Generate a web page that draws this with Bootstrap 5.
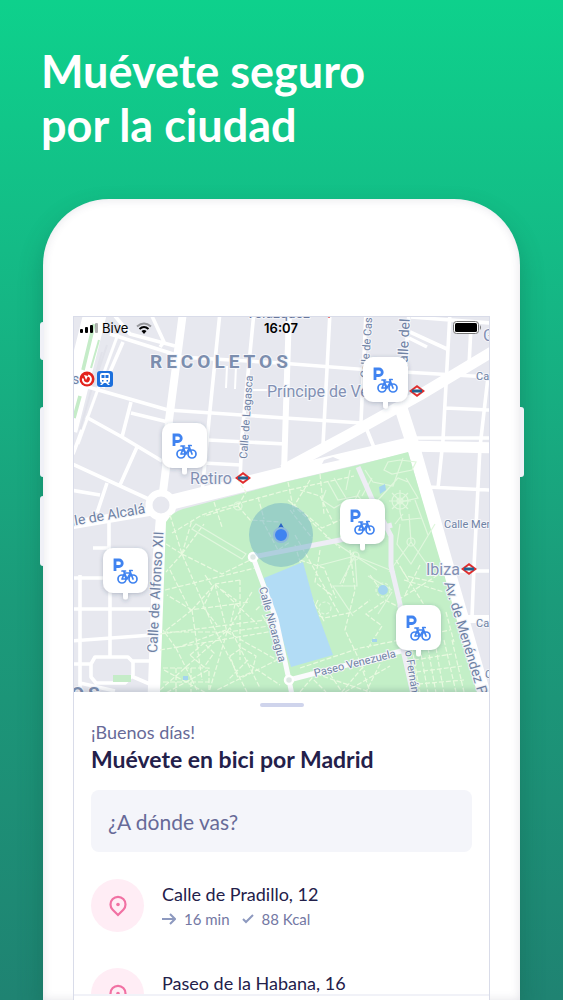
<!DOCTYPE html>
<html lang="es">
<head>
<meta charset="utf-8">
<meta name="viewport" content="width=device-width, initial-scale=1">
<title>Bive</title>
<link href="https://cdn.jsdelivr.net/npm/bootstrap@5.3.0/dist/css/bootstrap.min.css" rel="stylesheet">
<style>
  body { font-family: Lato, "Open Sans", sans-serif; background: linear-gradient(#0ed18c 0%, #14bb86 25%, #1b9b7a 60%, #1f8372 100%); color: #23204a; }
  .promo { padding: 44px 41px 0; height: 199px; font-size: 45px; line-height: 54px; font-weight: 700; }
  .phone { margin: 0 43px; padding: 117px 30px 0; background: #fff; border-radius: 66px 66px 0 0; min-height: 0;
    box-shadow: 0 12px 24px rgba(10,80,60,.3), inset 0 0 10px rgba(60,60,90,.14); }
  .side-key { position: absolute; width: 4px; height: 70px; background: #f0f1f7; border-radius: 3px 0 0 3px; left: -3px; }
  .key-mute { top: 123px; height: 38px; }
  .key-up { top: 208px; }
  .key-down { top: 297px; }
  .key-power { top: 208px; left: auto; right: -4px; border-radius: 0 3px 3px 0; }
  .screen { border: 1px solid #d9dce9; border-bottom: 0; min-height: 0; }
  .map { height: 375px; background: #e7e8ef; }
  .map svg.city { width: 100%; height: 100%; display: block; }
  .status { top: 0; left: 0; right: 0; height: 22px; padding: 0 7px 0 6px; font: 13px/22px Inter, sans-serif; color: #000; }
  .status > * { flex: 1 1 0; }
  .sheet { padding: 11px 17px 0; background: #fff; min-height: 0; box-shadow: 0 -2px 6px rgba(40,60,90,.2); }
  .grip { width: 44px; height: 4px; background: #cfd4ec; }
  .hello { margin-top: 13px; font-size: 18px; line-height: 24px; color: #676a98; }
  .sheet-title { font-size: 23px; line-height: 30px; font-weight: 700; margin: 0; }
  .search { margin-top: 16px; height: 62px; padding: 0 17px; border: 0; border-radius: 8px; background: #f4f5fa; font-size: 21px; color: #676a98; }
  .search::placeholder { color: #676a98; opacity: 1; }
  .places { margin-top: 27px; gap: 36px; }
  .place { height: 53px; gap: 18px; color: #23204a; }
  .place-dot { width: 53px; height: 53px; background: #ffedf5; }
  .place-text { padding-top: 2px; }
  .place-name { font-size: 18px; line-height: 26px; }
  .place-meta { font-size: 15px; line-height: 24px; color: #7378a3; }
  .tabs-edge { height: 6px; border-top: 2px solid #f1f2f8; background: #fff; }
  .roads { fill: none; stroke: #fff; stroke-width: 3.600; stroke-linejoin: round; }
  .wide { stroke-width: 13; }
  .walk { fill: none; stroke: #e9fae0; stroke-width: 1.2; stroke-dasharray: 5 2; }
  .trail { fill: none; stroke: #e0f7dd; stroke-width: 1.2; }
  .lane { fill: none; stroke: #eeedf5; stroke-width: 5; stroke-linejoin: round; }
  .labels { font-family: Roboto, sans-serif; fill: #6f82a4; stroke: #f5f6fa; stroke-width: 2; paint-order: stroke; font-size: 14px; }
  .labels .tiny { font-size: 11px; }
  .labels .big { font-size: 16px; fill: #8290b3; }
  .labels .zone { font-size: 19px; font-weight: 700; letter-spacing: 4px; fill: #7c8eae; }
</style>
</head>
<body class="vh-100 overflow-hidden d-flex flex-column">
<h1 class="promo text-white mb-0 flex-shrink-0">Muévete seguro<br>por la ciudad</h1>

<main class="phone position-relative flex-fill d-flex flex-column">
  <span class="side-key key-mute"></span><span class="side-key key-up"></span>
  <span class="side-key key-down"></span><span class="side-key key-power"></span>

  <div class="screen flex-fill d-flex flex-column overflow-hidden">
    <section class="map position-relative flex-shrink-0" aria-label="Mapa de Madrid">
      <svg class="city" viewBox="74 317 415 375" preserveAspectRatio="xMidYMid slice">
        <defs>
          <g id="pin">
            <path d="M20 43h5v6a2.500 2.500 0 0 1-5 0z" fill="#fff"/>
            <rect width="45" height="45" rx="10" fill="#fff"/>
            <path d="M12 23V12h4a3.100 3.100 0 0 1 0 6.500h-4" fill="none" stroke="#3f83f0" stroke-width="2.800"/>
            <g fill="none" stroke="#3f83f0" stroke-width="1.700" stroke-linecap="round" stroke-linejoin="round">
              <circle cx="19" cy="31" r="4"/><circle cx="30" cy="31" r="4"/>
              <path d="M19 31l2.500-6h6L24 31h-5M21 24l3 7M30 31l-3.300-8.500h2.500M19 23h3.500"/>
            </g>
          </g>
          <g id="metro">
            <path d="M0-6L8 0 0 6-8 0z" fill="#e02d2d"/><path d="M0-3.500L5 0 0 3.500-5 0z" fill="#fff"/><path d="M-5-1.500H5v3H-5z" fill="#23618e"/>
          </g>
          <filter id="lift" x="-30%" y="-30%" width="160%" height="160%"><feDropShadow dx="0" dy="1" stdDeviation="2" flood-color="#30405f" flood-opacity=".3"/></filter>
        </defs>

        <!-- streets around the park -->
        <g class="roads">
          <path stroke-width="3" d="M118 334L78 444"/>
          <path style="stroke-width:23px" d="M96 310L66 430"/>
          <path style="stroke:#c5ecc8" d="M94 324L83 370M80 396l-6 22"/>
          <path style="stroke:#c5ecc8;stroke-width:2px" d="M99 340l-8 28"/>
          <path style="stroke:#e1e2ea;stroke-width:2px" d="M102 352L80 430M107 345L92 390"/>
          <path d="M123 342L103 388M110 334l57 18 12 4M115 316l15 18 45 12M152 316l12 26-4 5"/>
          <path style="stroke-width:8px" d="M183 312L169 420 166 468 162 500"/>
          <path d="M220 312L209 420 202 493M254 312L242 435 240 480M180 357L280 363 370 370 490 377M88 387L168 410 285 418 362 423"/>
          <path d="M131 402l-9 35M131 413l37 9M86 417l36 20 40 24M70 463l85 39M137 447l-17 38M107 483l-10 30M70 490l30 5M82 430l-9 24M208 440l78 4M203 463l38 2"/>
          <path style="stroke-width:2px" d="M227 366l-1 22M236 366l-1 23M248 390h24"/>
          <path style="stroke-width:6px" d="M289 312L284 472"/>
          <path d="M330 312L323 445M366 312L361 422M409 312l-5 68M450 312L443 440 438 488M471 326l-2 40M488 377l-8 70-6 120-2 50M411 317l79 6M410 332l37 17M409 338l18 9M445 408l45 2M365 425l10 25M413 438h77M428 487l62 3"/>
          <path style="stroke-width:11px" d="M283 470L350 434 420 395 495 350M405 446l90 2"/>
          <path style="stroke-width:15px" d="M172 502L285 474 408 445"/>
          <path class="wide" d="M399 402L413 445 447 565 486 700"/>
          <path style="stroke-width:13px" d="M163 510L159 560 154 700"/>
          <path style="stroke-width:9px" d="M70 525L152 511M165 500l9 5"/>
          <circle cx="161" cy="505" r="12" fill="#e7e8ef" style="stroke-width:7px"/>
          <path d="M70 578h36M70 609h80M70 641l82-6M80 575v120M110 590v66M109 522v30M93 548h16M70 664h21l4-7h33l5 5v13l-8 8H96l-5-6v-14M133 661h18M80 683l35 8M131 676l21 9"/>
          <path style="stroke-width:8px" d="M455 619h40"/>
          <path d="M447 571h43M478 673l14 1"/>
        </g>
        <path d="M113 675h18v7h-18z" fill="#c5ecc8"/>
        <path d="M324 460l9-3 7 3-18 4z" fill="#e7e8ef"/>

        <!-- Parque del Retiro -->
        <path d="M166 522Q172 512 183 509L285 482 358 465 408 452 441 563 477 693H160z" fill="#c3efc7"/>
        <g class="walk">
          <path d="M172 533l30-18 20-7 62-17 70-15M182 554l-16 18M170 515l12 39 30 70 35 68M182 554l-16-10M182 554l40 20 30-15M182 554l10-34M182 554l22-30M165 590l90-22M170 570l20 40 60-8M192 610l-25-15M192 610l23-26 42 40M192 610l-28 22M192 610l10 70M215 584l12 48-18 60M160 634l120-16M163 632l65 0 55-8M160 650l120-20M176 648l22 44M176 648l-13-18M176 648l50-18M160 690l70-62 30 60M227 632l25-40M227 632l50 28-60 30M240 580l-25 4M240 580v80M205 575l8 12-10 20 14 18M222 590l14 10-6 26M248 660l-20 20M250 665l30 20"/>
          <path d="M190 655l14-12 10 10-10 14zM230 656l12-8 14 8-4 16-14 6zM256 610l10-10M262 615l14 22"/>
          <path d="M163 668h46v30M163 682h46M176 668v28M191 668v28M164 670l44 24M208 670l-44 24"/>
          <path d="M214 502l8 25M238 506l8-14-8-12M238 506l12 14 30 2M238 506l-34 10M258 497l6 22M288 482l6 30M320 474l4 40M288 500l34 28 18-8M290 510l22 28M295 545l15 50 15 28M300 560l24 8 12 30M262 520l16 30 12-8M310 480l-16 26 46 42M300 490l20 6 14 28"/>
          <path d="M295 535l45 80M320 550l-5 32 18 14M350 550l5 40-10 40 20 42M318 600l-6 12 12 6 30-6 16-12M354 552l-12 34M370 575l10 14M300 668l60-20 90-18M385 600l16 8M368 648l14-22-16-12 20-14M396 560l10 16 28 6M398 600l40-25M402 570l38 60M420 565l-15 30M404 580l40 12"/>
          <path d="M300 692l12-14 14 14M330 674l12 18 20-24 8 24M380 664l-14 28M310 672l60 20M345 692l45-26"/>
          <path d="M412 648l8 45M420 648l8 45M428 648l8 45M436 648l8 45M444 640l12 52M452 640l12 52M414 660l38-6M416 672l46-6M418 684l46-4M446 612l8 30"/>
        </g>
        <g class="trail">
          <path d="M328 482l10 18 20-4 12 14M326 490l-4 10 12 8 14-8M334 478l12 20M350 470l-4 20M360 490l-10 20M365 470l8 12 20 4 10-28M388 462l-4 8 8 4 20-4 4-8-16-2zM378 500l20-22 10 4M372 478l-10 18M406 478l12 20-18 4"/>
          <circle cx="400" cy="501" r="8"/><circle cx="400" cy="501" r="3"/>
          <path d="M400 490v22M389 501h22M392 493l16 16M408 493l-16 16M400 512l2 8 20-2M395 524l8-10M400 524l-3 20 14 20 24-40M411 542l-22 30M411 542l20 28M415 500l13 35M411 542l-2-28M355 556l-30-20M355 556l-38 10M355 556l40 16M355 556l2 30-24 0 20 30M355 556l-15 28M355 556l22 14"/>
          <circle cx="411" cy="542" r="4"/><circle cx="355" cy="556" r="4"/>
          <path d="M196 524l50 30-4 5-50-30zM368 576l24 14M392 592l-14 22"/>
          <circle cx="383" cy="590" r="7" stroke-dasharray="3 2"/><circle cx="325" cy="608" r="6" stroke-dasharray="3 2"/><circle cx="238" cy="506" r="4"/>
        </g>
        <path d="M264 578L303 562 315 606 333 655 291 667 276 617z" fill="#b2dcf5"/>
        <path d="M379 487l6-3 1 6-6 4zM378 590a5 5 0 1 0 10 0 5 5 0 0 0-10 0M183 676h5v4h-5zM372 639h5v3h-5z" fill="#a4d5ee"/>
        <g class="lane">
          <path d="M358 467l14 32 19 37v30l9 38 3 46 10 44M253 557l87-17 52-15"/>
          <path stroke="#fbfbfd" d="M253 557l23 62 13 61 3 15M289 680l112-29"/>
        </g>
        <circle cx="253" cy="557" r="4" fill="#dfe9e5" stroke="#fff" stroke-width="2.500"/>
        <circle cx="289" cy="680" r="4" fill="#dfe9e5" stroke="#fff" stroke-width="2.500"/>

        <g class="labels">
          <text class="zone" x="150" y="368">RECOLETOS</text>
          <text class="zone" x="71" y="700">OS</text>
          <text class="big" x="267" y="397">Príncipe de Ve</text>
          <text class="big" x="190" y="484">Retiro</text>
          <text class="big" x="426" y="575">Ibiza</text>
          <text class="big" x="483" y="341">G</text>
          <text x="246" y="318" fill="#68779c">Velázquez</text>
          <text x="72" y="384">s</text>
          <text class="tiny" x="444" y="528">Calle Men</text>
          <text class="tiny" x="476" y="380">Ca</text>
          <text class="tiny" x="476" y="627">Ca</text>
          <text class="tiny" x="485" y="678">C</text>
          <text class="tiny" transform="translate(247 459)rotate(-86)">Calle de Lagasca</text>
          <text class="tiny" transform="translate(368 378)rotate(-86)">Calle de Cas</text>
          <text transform="translate(407 372)rotate(-87)">Calle del P</text>
          <text transform="translate(72 526)rotate(-10)">lle de Alcalá</text>
          <text transform="translate(157 653)rotate(-87)">Calle de Alfonso XII</text>
          <text class="tiny" transform="translate(259 588)rotate(75)">Calle Nicaragua</text>
          <text class="tiny" transform="translate(315 677)rotate(-14)">Paseo Venezuela</text>
          <text class="tiny" transform="translate(405 651)rotate(81)">o Fernán N</text>
          <text transform="translate(444 583)rotate(73)">Av. de Menéndez P</text>
        </g>

        <use href="#metro" x="243" y="478"/><use href="#metro" x="417" y="391"/><use href="#metro" x="469" y="569"/><use href="#metro" x="329" y="312"/>
        <circle cx="87" cy="379" r="7.500" fill="#e3231c"/>
        <path d="M88 375.500a4 4 0 1 1-5 3" fill="none" stroke="#fff" stroke-width="2"/><path d="M84 375l4 1-2 4z" fill="#fff"/>
        <rect x="97" y="371" width="16" height="16" rx="3" fill="#1b6fdc"/>
        <path d="M102 373h6q2 0 2 2v6q0 2-2 2l2 2h-2l-2-2h-2l-2 2h-2l2-2q-2 0-2-2v-6q0-2 2-2z" fill="#fff"/>
        <path d="M101.500 375h3v3h-3zM105.500 375h3v3h-3zM102 380h1.500v1.500H102zM106.500 380h1.500v1.500h-1.500z" fill="#1b6fdc"/>

        <circle cx="281" cy="535" r="32" fill="#6cadc4" fill-opacity=".48"/>
        <path d="M281 523l3 5h-6z" fill="#2b65c4"/>
        <circle cx="281" cy="535" r="7" fill="#3f83f0" stroke="#8eb9dc" stroke-width="2"/>
        <g filter="url(#lift)">
          <use href="#pin" x="162" y="423"/><use href="#pin" x="363" y="357"/><use href="#pin" x="340" y="499"/>
          <use href="#pin" x="103" y="548"/><use href="#pin" x="396" y="605"/>
        </g>
      </svg>

      <div class="status position-absolute d-flex">
        <div class="d-flex align-items-center gap-1">
          <svg width="18" height="10"><g fill="#000"><rect y="6" width="3" height="4" rx="1"/><rect x="5" y="4" width="3" height="6" rx="1"/><rect x="10" y="2" width="3" height="8" rx="1"/><rect x="15" width="3" height="10" rx="1" opacity=".3"/></g></svg>
          <span>Bive</span>
          <svg class="ms-1" width="16" height="12" viewBox="0 0 16 12" fill="none" stroke="#000" stroke-width="2"><path d="M1 4.500Q8-1.500 15 4.500" opacity=".35"/><path d="M3.500 7Q8 3 12.500 7"/><path d="M8 12l-2.500-3Q8 7 10.500 9z" fill="#000" stroke="none"/></svg>
        </div>
        <span class="text-center fw-semibold">16:07</span>
        <div class="d-flex align-items-center justify-content-end">
          <svg width="29" height="14"><rect x=".5" y=".5" width="25" height="12" rx="3" fill="#fff" stroke="#777"/><rect x="2" y="2" width="22" height="9" rx="1.500"/><path d="M27 4q2 2.500 0 5z" fill="#777"/></svg>
        </div>
      </div>
    </section>

    <section class="sheet position-relative flex-fill overflow-hidden">
      <div class="grip rounded-pill mx-auto"></div>
      <p class="hello mb-0">¡Buenos días!</p>
      <h2 class="sheet-title">Muévete en bici por Madrid</h2>
      <input class="search w-100 d-block" type="text" aria-label="¿A dónde vas?" placeholder="¿A dónde vas?">
      <div class="places d-flex flex-column">
        <a href="#" class="place d-flex text-decoration-none">
          <span class="place-dot rounded-circle d-flex align-items-center justify-content-center flex-shrink-0">
            <svg width="18" height="22" viewBox="0 0 18 22" fill="none" stroke="#f171a3" stroke-width="2.200"><path d="M9 20L3.700 14.700a7.500 7.500 0 1 1 10.600 0z"/><circle cx="9" cy="9.500" r="1.800" fill="#f171a3" stroke="none"/></svg>
          </span>
          <span class="place-text d-block">
            <span class="place-name d-block">Calle de Pradillo, 12</span>
            <span class="place-meta d-flex align-items-center gap-2">
              <svg width="14" height="12" fill="none" stroke="#8d99bf" stroke-width="2"><path d="M0 6h13M8 1l5 5-5 5"/></svg>16 min
              <svg class="ms-1" width="12" height="10" fill="none" stroke="#8d99bf" stroke-width="2"><path d="M1 5l3 3 7-7"/></svg>88 Kcal
            </span>
          </span>
        </a>
        <a href="#" class="place d-flex text-decoration-none">
          <span class="place-dot rounded-circle d-flex align-items-center justify-content-center flex-shrink-0">
            <svg width="18" height="22" viewBox="0 0 18 22" fill="none" stroke="#f171a3" stroke-width="2.200"><path d="M9 20L3.700 14.700a7.500 7.500 0 1 1 10.600 0z"/><circle cx="9" cy="9.500" r="1.800" fill="#f171a3" stroke="none"/></svg>
          </span>
          <span class="place-text d-block">
            <span class="place-name d-block">Paseo de la Habana, 16</span>
          </span>
        </a>
      </div>
    </section>
    <div class="tabs-edge flex-shrink-0 position-relative"></div>
  </div>
</main>
<script src="https://cdn.jsdelivr.net/npm/bootstrap@5.3.0/dist/js/bootstrap.bundle.min.js"></script>
</body>
</html>
